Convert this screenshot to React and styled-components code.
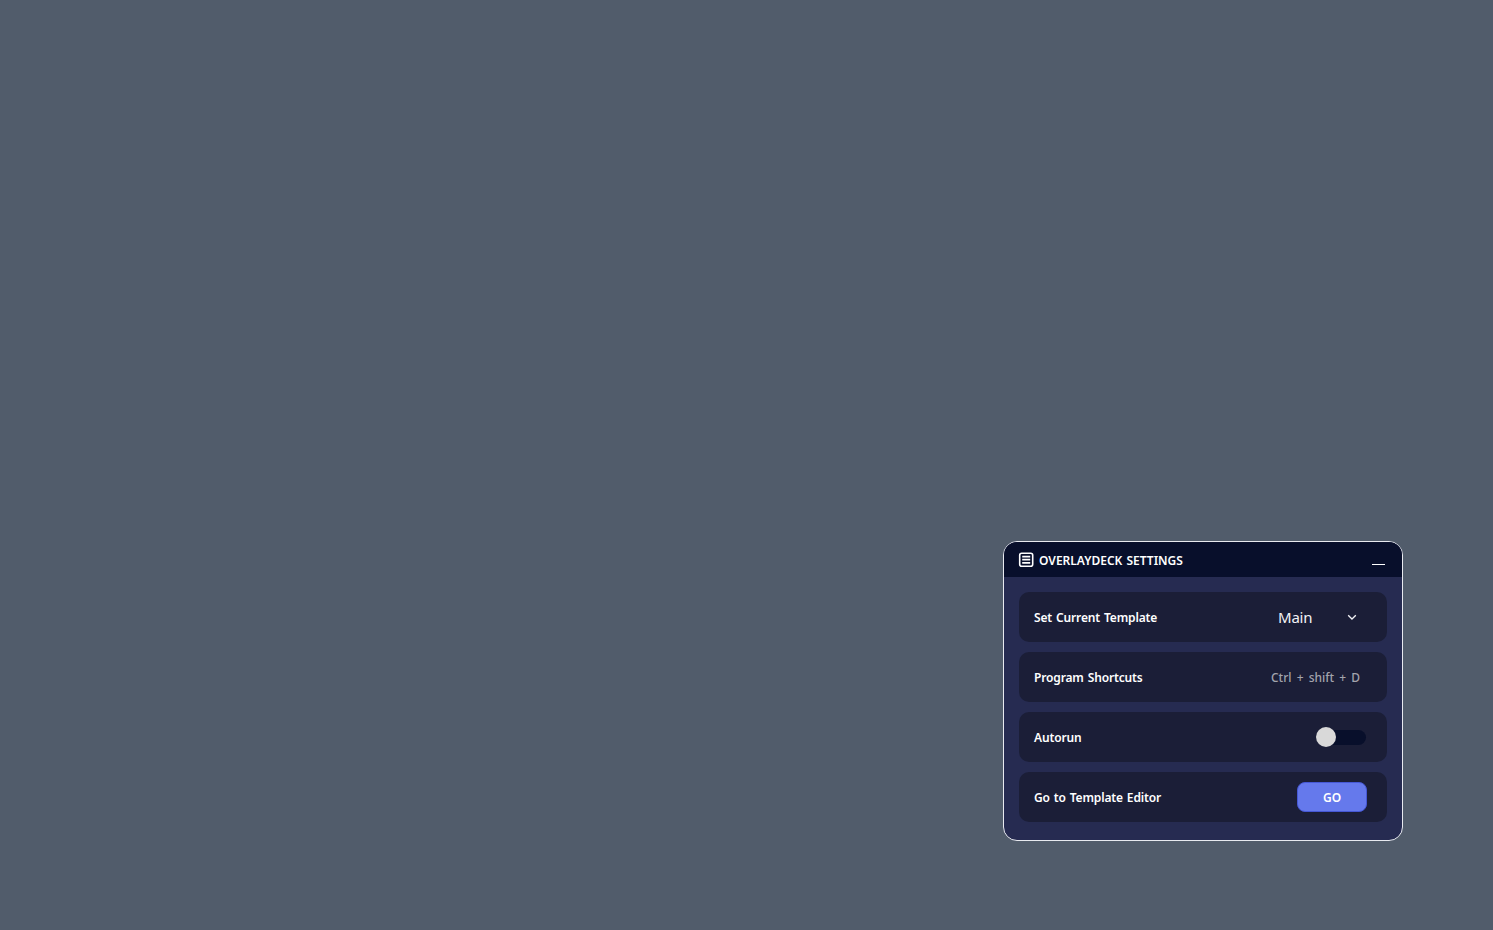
import React from "react";
import styled, { createGlobalStyle } from "styled-components";

const Global = createGlobalStyle`
  html, body { margin: 0; padding: 0; height: 100%; }
  body { background: #515c6b; font-family: "Noto Sans", "Open Sans", sans-serif; }
  #root { height: 100%; }
`;

const Page = styled.div`
  box-sizing: border-box;
  width: 100%;
  height: 100vh;
  overflow: hidden;
  display: flex;
  justify-content: flex-end;
  align-items: flex-end;
  padding: 0 90px 89px 0;
`;

const Panel = styled.section`
  box-sizing: border-box;
  width: 400px;
  height: 300px;
  border: 1px solid #e8eaf0;
  border-radius: 14px;
  background: #262b51;
  overflow: hidden;
  display: flex;
  flex-direction: column;
`;

const TitleBar = styled.header`
  height: 35px;
  flex: none;
  background: #080f2b;
  display: flex;
  align-items: center;
  padding: 0 17px 0 14px;
`;

const Title = styled.h1`
  margin: 2px 0 0 5px;
  font-size: 12px;
  line-height: 16px;
  font-weight: 600;
  color: #ffffff;
  word-spacing: 1px;
  flex: 1;
`;

const Minimize = styled.span`
  width: 13px;
  height: 1px;
  background: #ffffff;
  margin-top: 9px;
`;

const Body = styled.div`
  display: flex;
  flex-direction: column;
  gap: 10px;
  padding: 15px 15px 0;
`;

const Row = styled.div`
  height: 50px;
  box-sizing: border-box;
  border-radius: 10px;
  background: #1b1e37;
  display: flex;
  align-items: center;
  justify-content: space-between;
  padding: 0 20px 0 15px;
`;

const Label = styled.span`
  font-size: 12px;
  font-weight: 600;
  color: #ffffff;
  letter-spacing: -0.15px;
  word-spacing: 1px;
`;

const Select = styled.div`
  display: flex;
  align-items: center;
  width: 89px;
  justify-content: space-between;
  padding-right: 10px;
  box-sizing: border-box;
  font-size: 15px;
  letter-spacing: -0.2px;
  color: #f2f2f6;
`;

const Shortcut = styled.span`
  font-size: 12px;
  font-weight: 500;
  color: #a3a4ad;
  word-spacing: 2px;
  margin-right: 7px;
`;

const Toggle = styled.div`
  width: 50px;
  height: 15px;
  border-radius: 8px;
  background: #080f2b;
  position: relative;
  margin-right: 1px;
`;

const Knob = styled.span`
  position: absolute;
  left: 0;
  top: -3px;
  width: 20px;
  height: 20px;
  border-radius: 50%;
  background: #d9d9d9;
`;

const GoButton = styled.button`
  width: 70px;
  height: 30px;
  box-sizing: border-box;
  border: 1px solid #4658d6;
  border-radius: 8px;
  background: #6579ec;
  color: #ffffff;
  font-family: inherit;
  font-size: 12px;
  font-weight: 600;
  padding: 0;
`;

const LogoIcon = () => (
  <svg width="16" height="16" viewBox="0 0 16 16" fill="none">
    <rect x="1.7" y="1.2" width="13" height="13" rx="2" stroke="#fff" strokeWidth="1.6" />
    <path d="M4.2 4.6h8M4.2 7.7h8M4.2 10.8h8" stroke="#fff" strokeWidth="1.8" />
  </svg>
);

const Chevron = () => (
  <svg width="10" height="10" viewBox="0 0 10 10" fill="none">
    <path d="M1.2 3.2 5 7l3.8-3.8" stroke="#f2f2f6" strokeWidth="1.3" />
  </svg>
);

export default function App() {
  return (
    <>
      <Global />
      <Page>
        <Panel>
          <TitleBar>
            <LogoIcon />
            <Title>OVERLAYDECK SETTINGS</Title>
            <Minimize />
          </TitleBar>
          <Body>
            <Row>
              <Label>Set Current Template</Label>
              <Select>
                Main
                <Chevron />
              </Select>
            </Row>
            <Row>
              <Label>Program Shortcuts</Label>
              <Shortcut>Ctrl + shift + D</Shortcut>
            </Row>
            <Row>
              <Label>Autorun</Label>
              <Toggle>
                <Knob />
              </Toggle>
            </Row>
            <Row>
              <Label>Go to Template Editor</Label>
              <GoButton>GO</GoButton>
            </Row>
          </Body>
        </Panel>
      </Page>
    </>
  );
}
